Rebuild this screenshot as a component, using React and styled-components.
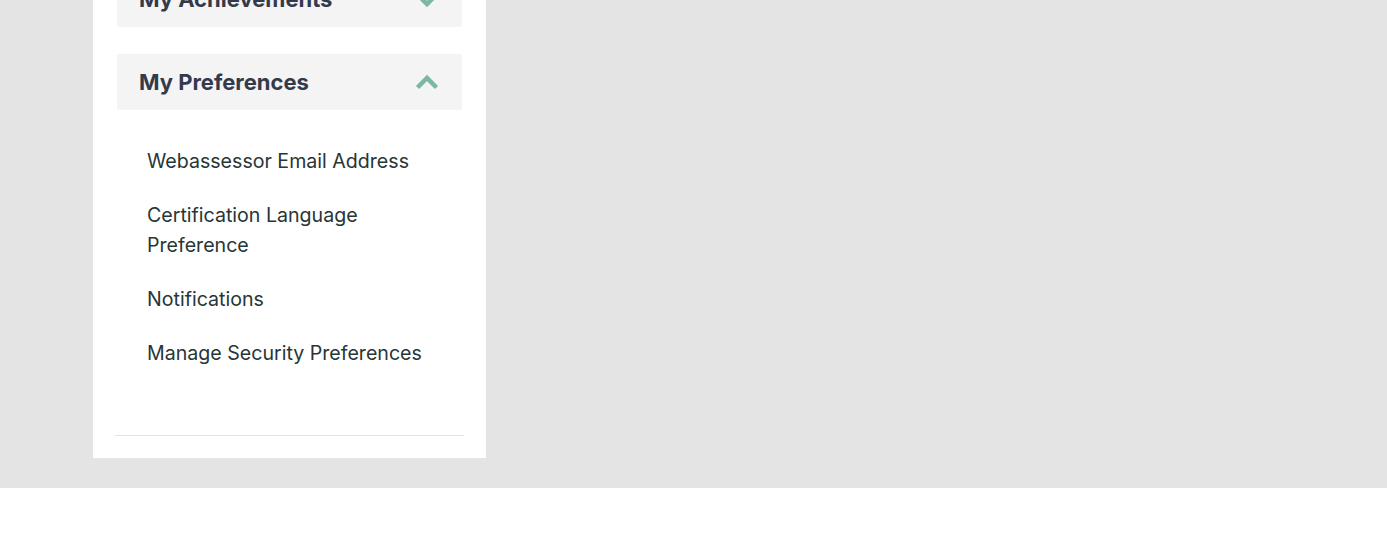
import React from 'react';
import styled, {createGlobalStyle} from "styled-components";

const GlobalStyle = createGlobalStyle`
  body {
    margin: 0;
    background: #ffffff;
    font-family: "Inter", "Lato", sans-serif;
  }
`;

const preferences = [
    "Webassessor Email Address",
    "Certification Language Preference",
    "Notifications",
    "Manage Security Preferences",
];

// Chevron for the accordion headers
const Chevron = ({ up }) => (
    <ChevronIcon width="24" height="17" viewBox="0 0 24 17" $up={up}>
        <path d="M2.5 13.5 L12 4 L21.5 13.5" fill="none" stroke="#7ab8a4" strokeWidth="4.5" strokeLinecap="butt" strokeLinejoin="miter" />
    </ChevronIcon>
);

const App = () => {
    return (
        <>
            <GlobalStyle />
            <Page>
                <Sidebar>
                    <Section>
                        <Header>
                            <Title>My Achievements</Title>
                            <Chevron />
                        </Header>
                    </Section>

                    <Section>
                        <Header>
                            <Title>My Preferences</Title>
                            <Chevron up />
                        </Header>
                        <LinkList>
                            {
                                preferences.map((item) => (
                                    <li key={item}>
                                        <LinkItem href="#">{item}</LinkItem>
                                    </li>
                                ))
                            }
                        </LinkList>
                    </Section>

                    <Divider />
                </Sidebar>
            </Page>
            <Footer />
        </>
    );
};

// Styles
const Page = styled.div`
  background: #e4e4e4;
  padding: 0 0 30px 93px;
  overflow: hidden;
`;

const Sidebar = styled.aside`
  width: 393px;
  box-sizing: border-box;
  background: #ffffff;
  margin-top: -53px;
  padding: 24px 22px 22px;
`;

const Section = styled.div`
  padding: 0 2px;
  margin-bottom: 27px;

  &:last-of-type {
    margin-bottom: 0;
  }
`;

const Header = styled.div`
  height: 56px;
  box-sizing: border-box;
  display: flex;
  align-items: center;
  justify-content: space-between;
  padding: 0 23px 0 22px;
  background: #f4f4f4;
  border-radius: 2px;
`;

const Title = styled.h3`
  margin: 0;
  font-size: 22px;
  font-weight: 700;
  color: #333a4c;
`;

const ChevronIcon = styled.svg`
  display: block;
  transform: ${props => props.$up ? 'none' : 'rotate(180deg)'};
`;

const LinkList = styled.ul`
  list-style: none;
  margin: 0;
  padding: 36px 24px 67px 30px;
  display: flex;
  flex-direction: column;
  gap: 24px;
`;

const LinkItem = styled.a`
  display: block;
  font-size: 19.6px;
  line-height: 30px;
  color: #273636;
  text-decoration: none;
`;

const Divider = styled.hr`
  margin: 0;
  border: 0;
  border-top: 1px solid #e4e4e4;
`;

const Footer = styled.div`
  height: 59px;
  background: #ffffff;
`;

export default App;
